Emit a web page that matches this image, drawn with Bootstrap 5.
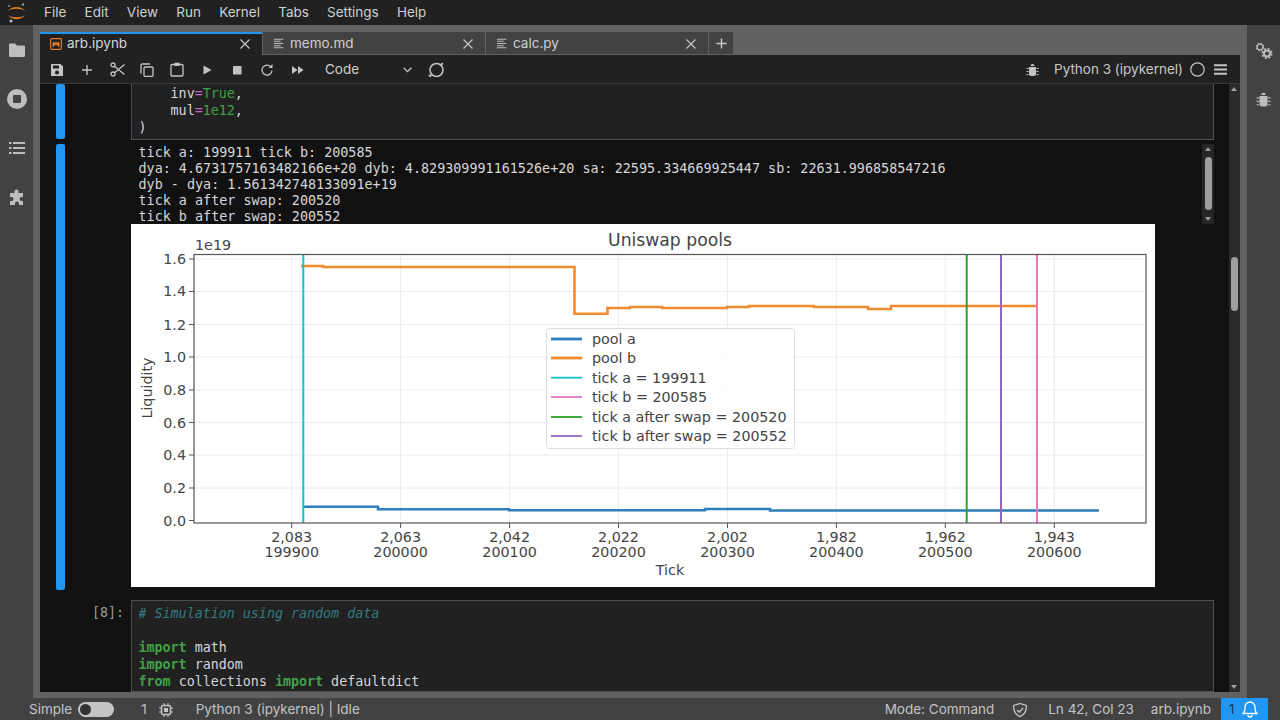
<!DOCTYPE html>
<html lang="en">
<head>
<meta charset="utf-8">
<title>arb.ipynb</title>
<link href="https://cdn.jsdelivr.net/npm/bootstrap@5.3.0/dist/css/bootstrap.min.css" rel="stylesheet">
<style>
html,body{height:720px;overflow:hidden;margin:0;background:#616161;color:#d0d0d0;font-family:Inter,"Noto Sans",sans-serif;font-size:13.5px}
svg{display:block;flex:none}
.jp-top{height:25px;background:#212121;padding-left:6px}
.jp-logo{width:24px;margin-right:14px}
.jp-menu{color:#cfcfcf;line-height:25px;margin-right:18.2px}
.jp-mid{height:673px}
.jp-side{width:33px;background:#424242;color:#b8b8b8}
.jp-side-l{padding-top:15px;gap:29px}
.jp-side-r{padding-top:17px;gap:31px}
.jp-main{width:1214px;padding:7px 7px 6px}
.jp-tabs{height:23px;gap:1px}
.jp-tab{width:222px;background:#424242;color:#cfcfcf;padding:1px 12px 0 10px;gap:5px;height:22px}
.jp-tab.on{background:#212121;border-top:2px solid #2196f3;height:23px;color:#d6d6d6;padding-top:0;padding-bottom:2px}
.jp-tab .jp-x{margin-left:auto;color:#c0c0c0}
.jp-addtab{width:24px;height:22px;background:#424242}
.jp-tool{height:29px;background:#212121;border-bottom:1px solid #3a3a3a;color:#bdbdbd;padding:1px 13px 0 2px}
.jp-ti{width:30px;flex:none;display:flex;justify-content:center}
.jp-code-sel{width:87px;margin-left:13px;color:#cfcfcf;padding-right:0}
.jp-kname{color:#c8c8c8;margin-left:15px;margin-right:7px}
.jp-nbwrap{height:608px;background:#111;overflow:hidden}
.jp-nb{flex:1;min-width:0;overflow:hidden;padding-right:15px}
.jp-cell{position:relative}
.jp-bar{width:9px;margin-left:16px;background:#2196f3;border-radius:2px;flex:none}
.jp-prompt{width:66px;flex:none;font:13.33px/17px "DejaVu Sans Mono",monospace;color:#9c9c9c;text-align:right;padding-right:7px;padding-top:4px}
.jp-body{flex:1;min-width:0}
.jp-code{background:#212121;border:1px solid #4f4f4f;font:13.33px/17px "DejaVu Sans Mono",monospace;color:#d6d6d6;padding:4px 7px 4px 6.5px;white-space:pre;overflow:hidden}
.jp-c1{height:56px;border-top:0;padding-top:1px}
.jp-c2{height:92px}
.kw{color:#43a047;font-weight:700}.vl{color:#43a047}.eq{color:#ba68c8}.cm{color:#357b80;font-style:italic}
.jp-out{height:80px;position:relative;background:#111;font:13.41px/16px "DejaVu Sans Mono",monospace;color:#d6d6d6;padding:1px 8px 1px 7.5px;white-space:pre;overflow:hidden}
.jp-mini{position:absolute;right:0;top:0;width:12px;height:80px;background:#262626}
.jp-mini i{position:absolute;left:3px;top:13px;width:7px;height:53px;border-radius:4px;background:#9e9e9e}
.jp-up{position:absolute;left:3px;width:0;height:0;border:3.5px solid transparent;border-top:0;border-bottom:4px solid #9e9e9e}
.jp-dn{position:absolute;left:3px;width:0;height:0;border:3.5px solid transparent;border-bottom:0;border-top:4px solid #9e9e9e}
.jp-plot{width:1024px;height:363px;background:#fff}
.jp-track{width:11px;flex:none;background:#2b2b2b;position:relative}
.jp-track i{position:absolute;left:2px;top:173px;width:7px;height:54px;border-radius:4px;background:#9e9e9e}
.jp-status{height:22px;background:#424242;color:#c4c4c4;padding:1px 0 0 29px}
.jp-sw{width:36px;height:15px;border-radius:8px;background:#c4c4c4;margin-left:6px;padding-left:2px}
.jp-sw i{width:11px;height:11px;border-radius:50%;background:#333;display:block}
.jp-bell{width:47px;height:22px;margin-top:-1px;background:#2196f3;color:#17375a;padding-left:8px;gap:7px;margin-left:11px;margin-right:12px}
.pt{font-family:"DejaVu Sans",sans-serif;fill:#444;font-size:14.3px}
</style>
</head>
<body>
<div class="jp-top d-flex align-items-center">
  <svg class="jp-logo" width="24" height="25" viewBox="0 0 24 25"><path d="M2 11C5 5.500 16 5.500 19 11 16 8 5 8 2 11ZM2 15C5 20.500 16 20.500 19 15 16 18 5 18 2 15Z" fill="#e07b25"/><circle cx="17" cy="4.500" r="1.200" fill="#9a9a9a"/><circle cx="5" cy="21" r="1.500" fill="#bdbdbd"/><circle cx="3" cy="6" r="1" fill="#8a8a8a"/></svg>
  <span class="jp-menu">File</span><span class="jp-menu">Edit</span><span class="jp-menu">View</span><span class="jp-menu">Run</span><span class="jp-menu">Kernel</span><span class="jp-menu">Tabs</span><span class="jp-menu">Settings</span><span class="jp-menu">Help</span>
</div>
<div class="jp-mid d-flex">
  <div class="jp-side jp-side-l d-flex flex-column align-items-center">
    <svg width="18" height="20" viewBox="0 0 18 20"><path d="M1 4.500a1 1 0 0 1 1-1h5l2 2h7a1 1 0 0 1 1 1V16a1 1 0 0 1-1 1H2a1 1 0 0 1-1-1Z" fill="#bdbdbd"/></svg>
    <svg width="20" height="20" viewBox="0 0 20 20"><circle cx="10" cy="10" r="10" fill="#bdbdbd"/><rect x="6" y="6" width="8" height="8" rx="1" fill="#424242"/></svg>
    <svg width="18" height="20" viewBox="0 0 18 20"><g fill="#bdbdbd"><rect x="1" y="4" width="2.500" height="2"/><rect x="1" y="9" width="2.500" height="2"/><rect x="1" y="14" width="2.500" height="2"/><rect x="5" y="4" width="12" height="2"/><rect x="5" y="9" width="12" height="2"/><rect x="5" y="14" width="12" height="2"/></g></svg>
    <svg width="18" height="20" viewBox="0 0 18 20"><path d="M6.500 4.500a2 2 0 0 1 4 0V6H15v4h-1.400a2 2 0 0 0 0 4H15v4h-4v-1.400a2 2 0 0 0-4 0V18H2v-4H3.500a2 2 0 0 0 0-4H2V6h4.500Z" fill="#bdbdbd"/></svg>
  </div>
  <div class="jp-main">
    <div class="jp-tabs d-flex align-items-start">
      <div class="jp-tab on d-flex align-items-center"><svg width="12" height="12" viewBox="0 0 14 14"><rect x=".7" y=".7" width="12.600" height="12.600" rx="1" fill="none" stroke="#e0762a" stroke-width="1.400"/><path d="M3 11V5h8v6L7 7.500Z" fill="#e0762a"/></svg><span>arb.ipynb</span><svg class="jp-x" width="10" height="10" viewBox="0 0 10 10"><path d="M.5.500 9.500 9.500M9.500.500.500 9.500" stroke="#c6c6c6" stroke-width="1.200"/></svg></div>
      <div class="jp-tab d-flex align-items-center"><svg width="12" height="11" viewBox="0 0 14 12"><path d="M1 1h11M1 3.500h8M1 6h11M1 8.500h8M1 11h11" stroke="#bdbdbd" stroke-width="1.200"/></svg><span>memo.md</span><svg class="jp-x" width="10" height="10" viewBox="0 0 10 10"><path d="M.5.500 9.500 9.500M9.500.500.500 9.500" stroke="#c6c6c6" stroke-width="1.200"/></svg></div>
      <div class="jp-tab d-flex align-items-center"><svg width="12" height="11" viewBox="0 0 14 12"><path d="M1 1h11M1 3.500h8M1 6h11M1 8.500h8M1 11h11" stroke="#bdbdbd" stroke-width="1.200"/></svg><span>calc.py</span><svg class="jp-x" width="10" height="10" viewBox="0 0 10 10"><path d="M.5.500 9.500 9.500M9.500.500.500 9.500" stroke="#c6c6c6" stroke-width="1.200"/></svg></div>
      <div class="jp-addtab d-flex align-items-center justify-content-center"><svg width="11" height="11" viewBox="0 0 11 11"><path d="M5.500.5v10M.5 5.500h10" stroke="#c6c6c6" stroke-width="1.500"/></svg></div>
    </div>
    <div class="jp-tool d-flex align-items-center">
      <span class="jp-ti"><svg width="14" height="14" viewBox="0 0 14 14"><path d="M1.500 1H10.500L13 3.500V12.500A.5.500 0 0 1 12.500 13H1.500A.5.500 0 0 1 1 12.500V1.500A.5.500 0 0 1 1.500 1ZM3 2.500V5.500H9V2.500ZM7 7.500a2 2 0 1 0 0 4 2 2 0 0 0 0-4Z" fill="#c4c4c4" fill-rule="evenodd"/></svg></span>
      <span class="jp-ti"><svg width="12" height="14" viewBox="0 0 12 14"><path d="M6 2v10M1 7h10" stroke="#c4c4c4" stroke-width="1.400"/></svg></span>
      <span class="jp-ti"><svg width="15" height="15" viewBox="0 0 15 15"><circle cx="3" cy="3" r="2" fill="none" stroke="#c4c4c4" stroke-width="1.300"/><circle cx="3" cy="12" r="2" fill="none" stroke="#c4c4c4" stroke-width="1.300"/><path d="M4.500 4.200 14.500 12.500M4.500 10.800 14.500 2.500" stroke="#c4c4c4" stroke-width="1.300"/></svg></span>
      <span class="jp-ti"><svg width="14" height="14" viewBox="0 0 14 14"><path d="M10 1H2.500A1.200 1.200 0 0 0 1 2.500V10.500" fill="none" stroke="#c4c4c4" stroke-width="1.300"/><rect x="4" y="4" width="9" height="9.300" rx="1" fill="none" stroke="#c4c4c4" stroke-width="1.300"/></svg></span>
      <span class="jp-ti"><svg width="14" height="15" viewBox="0 0 14 15"><rect x="1" y="2.500" width="12" height="11.500" rx="1" fill="none" stroke="#c4c4c4" stroke-width="1.300"/><rect x="4.500" y=".7" width="5" height="3.300" fill="#c4c4c4"/></svg></span>
      <span class="jp-ti"><svg width="10" height="10" viewBox="0 0 10 10"><path d="M1.500.5 9.500 5 1.500 9.500Z" fill="#c4c4c4"/></svg></span>
      <span class="jp-ti"><svg width="10" height="10" viewBox="0 0 10 10"><rect x="1" y="1" width="8.500" height="8.500" rx=".5" fill="#c4c4c4"/></svg></span>
      <span class="jp-ti"><svg width="12" height="12" viewBox="0 0 12 12"><path d="M10.300 3.500A5 5 0 1 0 11 6.500" fill="none" stroke="#c4c4c4" stroke-width="1.300"/><path d="M7.500 4H11.500V0Z" fill="#c4c4c4"/></svg></span>
      <span class="jp-ti"><svg width="13" height="10" viewBox="0 0 13 10"><path d="M1 1 6.500 5 1 9ZM7 1 12.500 5 7 9Z" fill="#c4c4c4"/></svg></span>
      <span class="jp-code-sel d-flex align-items-center justify-content-between"><span>Code</span><svg width="9" height="6" viewBox="0 0 9 6"><path d="M.7.8 4.500 4.600 8.300.8" fill="none" stroke="#c4c4c4" stroke-width="1.300"/></svg></span>
      <svg style="margin-left:15px" width="18" height="18" viewBox="0 0 18 18"><circle cx="9.500" cy="9" r="6.500" fill="none" stroke="#c4c4c4" stroke-width="1.500"/><path d="M1 14.500 5.500 12.500 3.500 16.500ZM17 3 12.500 5 14.500 1.500Z" fill="#c4c4c4"/></svg>
      <svg class="ms-auto" width="13" height="13" viewBox="0 0 13 13"><path d="M3 4h7v7a2 2 0 0 1-2 2H5a2 2 0 0 1-2-2ZM4.500 3a2 2 0 0 1 4 0Z M.5 5h2v1h-2ZM10.500 5h2v1h-2ZM.5 8h2v1h-2ZM10.500 8h2v1h-2ZM.5 11h2v1h-2ZM10.500 11h2v1h-2Z" fill="#c4c4c4"/></svg>
      <span class="jp-kname">Python 3 (ipykernel)</span>
      <svg width="15" height="15" viewBox="0 0 15 15"><circle cx="7.500" cy="7.500" r="6.700" fill="none" stroke="#c4c4c4" stroke-width="1.200"/></svg>
      <svg style="margin-left:9px" width="13" height="11" viewBox="0 0 13 11"><path d="M0 1.200h13M0 5.500h13M0 9.800h13" stroke="#c4c4c4" stroke-width="2"/></svg>
    </div>
    <div class="jp-nbwrap d-flex">
      <div class="jp-nb d-flex flex-column">
        <div class="jp-cell d-flex">
          <div class="jp-bar" style="height:55px"></div>
          <div class="jp-prompt"></div>
          <div class="jp-body"><div class="jp-code jp-c1">    inv<span class="eq">=</span><span class="vl">True</span>,
    mul<span class="eq">=</span><span class="vl">1e12</span>,
)</div></div>
        </div>
        <div class="jp-cell d-flex" style="margin-top:4px">
          <div class="jp-bar" style="height:446px"></div>
          <div class="jp-prompt"></div>
          <div class="jp-body">
            <div class="jp-out">tick a: 199911 tick b: 200585
dya: 4.6731757163482166e+20 dyb: 4.829309991161526e+20 sa: 22595.334669925447 sb: 22631.996858547216
dyb - dya: 1.561342748133091e+19
tick a after swap: 200520
tick b after swap: 200552<div class="jp-mini"><span class="jp-up" style="top:3px"></span><i></i><span class="jp-dn" style="bottom:3px"></span></div></div>
            <div class="jp-plot">
              <svg width="1024" height="363" viewBox="131 224 1024 363">
                <g stroke="#ececec" stroke-width="1">
                  <path d="M194 259H1146M194 291.500H1146M194 324.500H1146M194 357H1146M194 390H1146M194 422.500H1146M194 455H1146M194 488H1146"/>
                  <path d="M291.700 254V523M400.600 254V523M509.600 254V523M618.500 254V523M727.500 254V523M836.400 254V523M945.300 254V523M1054.300 254V523"/>
                </g>
                <path d="M303.300 506.700H378V509.300H509V510.300H705V509H770V510.500H1099" fill="none" stroke="#2f7fb8" stroke-width="2.600"/>
                <path d="M301 266H323V267H574.500V313.700H607.500V308H630V307H662V308H727V307H749V306H814V307H868V309H891V306H1038" fill="none" stroke="#f28a30" stroke-width="2.600"/>
                <path d="M303.300 254V523" stroke="#17becf" stroke-width="2"/>
                <path d="M1037 254V523" stroke="#e377c2" stroke-width="2"/>
                <path d="M966.700 254V523" stroke="#2ca02c" stroke-width="2"/>
                <path d="M1001 254V523" stroke="#9467bd" stroke-width="2"/>
                <rect x="194" y="254.500" width="952" height="268.500" fill="none" stroke="#555" stroke-width="1.200"/>
                <path d="M189 259h5M189 291.500h5M189 324.500h5M189 357h5M189 390h5M189 422.500h5M189 455h5M189 488h5M189 520.500h5M291.700 523v5M400.600 523v5M509.600 523v5M618.500 523v5M727.500 523v5M836.400 523v5M945.300 523v5M1054.300 523v5" stroke="#555" stroke-width="1"/>
                <g class="pt" text-anchor="end"><text x="186" y="264">1.6</text><text x="186" y="296">1.4</text><text x="186" y="329.500">1.2</text><text x="186" y="362">1.0</text><text x="186" y="395">0.8</text><text x="186" y="427.500">0.6</text><text x="186" y="460">0.4</text><text x="186" y="493">0.2</text><text x="186" y="525.500">0.0</text></g>
                <text class="pt" x="195" y="250">1e19</text>
                <text class="pt" x="670" y="246" text-anchor="middle" style="font-size:17.2px">Uniswap pools</text>
                <g class="pt" text-anchor="middle">
                  <text x="291.700" y="542">2,083</text><text x="291.700" y="557">199900</text>
                  <text x="400.600" y="542">2,063</text><text x="400.600" y="557">200000</text>
                  <text x="509.600" y="542">2,042</text><text x="509.600" y="557">200100</text>
                  <text x="618.500" y="542">2,022</text><text x="618.500" y="557">200200</text>
                  <text x="727.500" y="542">2,002</text><text x="727.500" y="557">200300</text>
                  <text x="836.400" y="542">1,982</text><text x="836.400" y="557">200400</text>
                  <text x="945.300" y="542">1,962</text><text x="945.300" y="557">200500</text>
                  <text x="1054.300" y="542">1,943</text><text x="1054.300" y="557">200600</text>
                  <text x="670" y="575">Tick</text>
                  <text transform="translate(152 388) rotate(-90)">Liquidity</text>
                </g>
                <rect x="546.500" y="328.500" width="248" height="120" rx="3" fill="#fff" fill-opacity=".85" stroke="#dcdcdc"/>
                <g stroke-width="2.400" fill="none">
                  <path d="M551 339H582" stroke="#2f7fb8" stroke-width="2.800"/><path d="M551 358H582" stroke="#f28a30" stroke-width="2.800"/>
                  <path d="M551 377.700H582" stroke="#17becf" stroke-width="1.800"/><path d="M551 397H582" stroke="#e377c2" stroke-width="1.800"/>
                  <path d="M551 417H582" stroke="#2ca02c" stroke-width="1.800"/><path d="M551 436H582" stroke="#9467bd" stroke-width="1.800"/>
                </g>
                <g class="pt"><text x="592" y="343.500">pool a</text><text x="592" y="363">pool b</text><text x="592" y="382.500">tick a = 199911</text><text x="592" y="402">tick b = 200585</text><text x="592" y="421.500">tick a after swap = 200520</text><text x="592" y="441">tick b after swap = 200552</text></g>
              </svg>
            </div>
          </div>
        </div>
        <div class="jp-cell d-flex" style="margin-top:10px">
          <div class="jp-bar invisible" style="height:1px"></div>
          <div class="jp-prompt">[8]:</div>
          <div class="jp-body"><div class="jp-code jp-c2"><span class="cm"># Simulation using random data</span>

<span class="kw">import</span> math
<span class="kw">import</span> random
<span class="kw">from</span> collections <span class="kw">import</span> defaultdict</div></div>
        </div>
      </div>
      <div class="jp-track"><span class="jp-up" style="left:2px;top:3px"></span><i></i><span class="jp-dn" style="left:2px;bottom:3px"></span></div>
    </div>
  </div>
  <div class="jp-side jp-side-r d-flex flex-column align-items-center">
    <svg width="18" height="18" viewBox="0 0 18 18"><g fill="none" stroke="#bdbdbd"><circle cx="5" cy="5" r="2.800" stroke-width="1.100"/><circle cx="5" cy="5" r="3.600" stroke-width="1.300" stroke-dasharray="1.500 1.330"/><circle cx="12" cy="11.500" r="3" stroke-width="2"/><circle cx="12" cy="11.500" r="4.800" stroke-width="1.500" stroke-dasharray="2.100 1.670"/></g></svg>
    <svg width="15" height="16" viewBox="0 0 13 13"><path d="M3 4h7v7a2 2 0 0 1-2 2H5a2 2 0 0 1-2-2ZM4.500 3a2 2 0 0 1 4 0Z M.5 5h2v1h-2ZM10.500 5h2v1h-2ZM.5 8h2v1h-2ZM10.500 8h2v1h-2ZM.5 11h2v1h-2ZM10.500 11h2v1h-2Z" fill="#bdbdbd"/></svg>
  </div>
</div>
<div class="jp-status d-flex align-items-center">
  <span>Simple</span><span class="jp-sw d-flex align-items-center"><i></i></span>
  <span style="margin-left:27px">1</span>
  <svg style="margin-left:12px" width="14" height="14" viewBox="0 0 14 14"><rect x="2.500" y="2.500" width="9" height="9" rx="1.500" fill="none" stroke="#c4c4c4" stroke-width="1.500"/><rect x="5" y="5" width="4" height="4" fill="#c4c4c4"/><path d="M5 0v2M9 0v2M5 12v2M9 12v2M0 5h2M0 9h2M12 5h2M12 9h2" stroke="#c4c4c4"/></svg>
  <span style="margin-left:23px">Python 3 (ipykernel) | Idle</span>
  <span class="ms-auto">Mode: Command</span>
  <svg style="margin-left:18px" width="16" height="16" viewBox="0 0 16 16"><path d="M8 1.500 14.500 3.500C14.500 9 12 13 8 14.700 4 13 1.500 9 1.500 3.500Z" fill="none" stroke="#c4c4c4" stroke-width="1.300"/><path d="M5 8 7.300 10.200 11 6" fill="none" stroke="#c4c4c4" stroke-width="1.300"/></svg>
  <span style="margin-left:20px">Ln 42, Col 23</span>
  <span style="margin-left:17px">arb.ipynb</span>
  <span class="jp-bell d-flex align-items-center" style="margin-left:10px"><span>1</span><svg width="16" height="18" viewBox="0 0 16 18"><path d="M1 13.500C3 12 3 10 3 7A5 5 0 0 1 13 7C13 10 13 12 15 13.500ZM6 15a2 2 0 0 0 4 0" fill="none" stroke="#fff" stroke-width="1.300"/></svg></span>
</div>
</body>
</html>
